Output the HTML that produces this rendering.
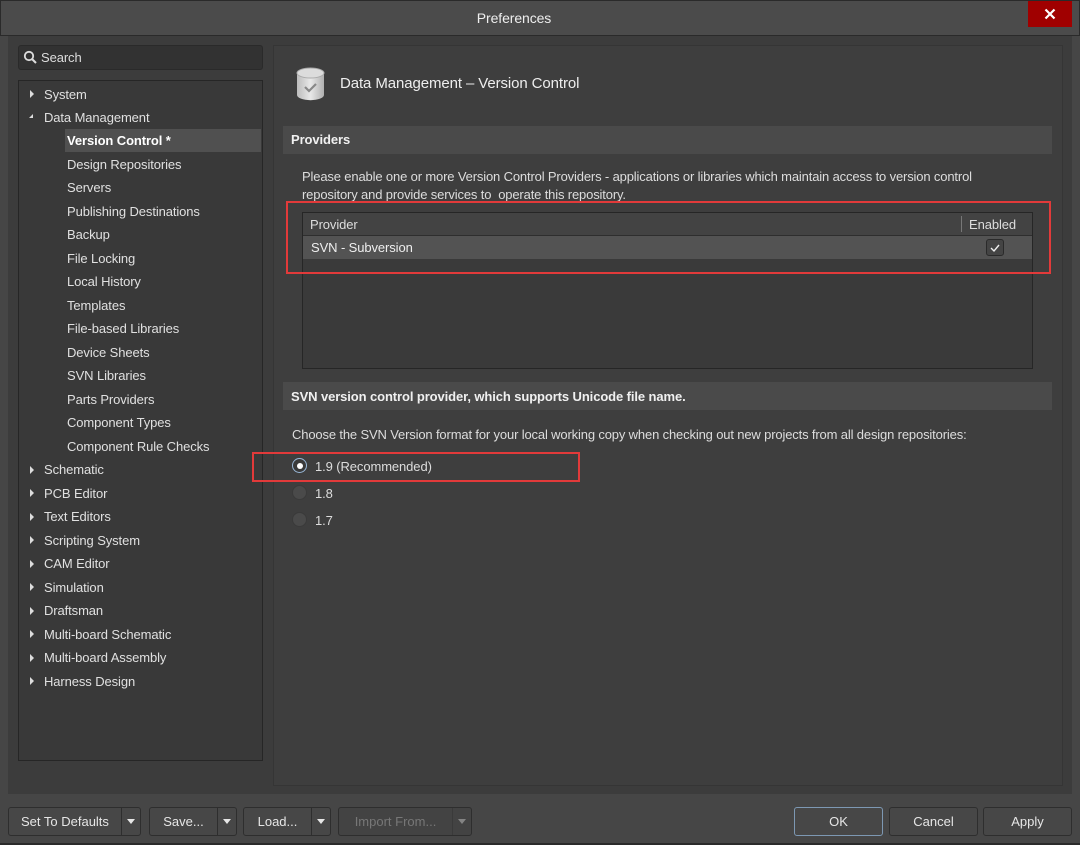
<!DOCTYPE html>
<html><head><meta charset="utf-8"><style>
*{box-sizing:border-box;margin:0;padding:0}
body{width:1080px;height:845px;background:#464646;font-family:"Liberation Sans",sans-serif;font-size:13px;color:#e6e6e6;position:relative;overflow:hidden}
.a{position:absolute}
.t{position:absolute;white-space:nowrap;letter-spacing:-0.1px}
.tree .t{font-size:13px;color:#e0e0e0}
.arr{position:absolute;width:0;height:0;border-top:4px solid transparent;border-bottom:4px solid transparent;border-left:4px solid #ddd}
.btn{position:absolute;top:807px;height:29px;border:1px solid #2e2e2e;border-radius:3px;background:#474747;color:#e6e6e6;font-size:13px;text-align:center;line-height:27px}
.dd{position:absolute;top:0;right:0;width:19px;height:27px;border-left:1px solid #2e2e2e}
.dd:after{content:"";position:absolute;left:5px;top:11px;border-left:4px solid transparent;border-right:4px solid transparent;border-top:5px solid #e6e6e6}
.radio{position:absolute;width:15px;height:15px;border-radius:50%;background:#4a4a4a;border:1px solid #3a3a3a}
</style></head><body>
<div class="a" style="left:0;top:0;width:1080px;height:36px;background:#4b4b4b;border:1px solid #2a2a2a"></div>
<div class="t" style="left:0;width:1028px;top:10px;text-align:center;font-size:14px;color:#eee">Preferences</div>
<div class="a" style="left:1028px;top:1px;width:44px;height:26px;background:#a00000"></div>
<svg class="a" style="left:1044px;top:8px" width="12" height="12"><path d="M1.5 1.5 L10.5 10.5 M10.5 1.5 L1.5 10.5" stroke="#fff" stroke-width="2.2"/></svg>
<div class="a" style="left:8px;top:36px;width:1064px;height:758px;background:#3c3c3c"></div>
<!-- search -->
<div class="a" style="left:18px;top:45px;width:245px;height:25px;background:#323232;border:1px solid #2a2a2a;border-radius:3px"></div>
<svg class="a" style="left:23px;top:50px" width="14" height="14"><circle cx="6" cy="6" r="4.2" stroke="#ddd" stroke-width="1.8" fill="none"/><line x1="9" y1="9" x2="13" y2="13" stroke="#ddd" stroke-width="2"/></svg>
<div class="t" style="left:41px;top:50px;color:#ddd">Search</div>
<!-- tree -->
<div class="a" style="left:18px;top:80px;width:245px;height:681px;background:#393939;border:1px solid #262626"></div>
<div class="a" style="left:65px;top:129px;width:196px;height:23px;background:#505050"></div>
<div class="tree">
<div class="arr" style="left:30px;top:90px"></div><div class="t" style="left:44px;top:87px">System</div>
<div class="a" style="left:29px;top:114px;border-left:4px solid transparent;border-bottom:4px solid #ddd;width:0;height:0"></div><div class="t" style="left:44px;top:110px">Data Management</div>
<div class="t" style="left:67px;top:133px;font-weight:bold;color:#fff">Version Control *</div>
<div class="t" style="left:67px;top:157px">Design Repositories</div>
<div class="t" style="left:67px;top:180px">Servers</div>
<div class="t" style="left:67px;top:204px">Publishing Destinations</div>
<div class="t" style="left:67px;top:227px">Backup</div>
<div class="t" style="left:67px;top:251px">File Locking</div>
<div class="t" style="left:67px;top:274px">Local History</div>
<div class="t" style="left:67px;top:298px">Templates</div>
<div class="t" style="left:67px;top:321px">File-based Libraries</div>
<div class="t" style="left:67px;top:345px">Device Sheets</div>
<div class="t" style="left:67px;top:368px">SVN Libraries</div>
<div class="t" style="left:67px;top:392px">Parts Providers</div>
<div class="t" style="left:67px;top:415px">Component Types</div>
<div class="t" style="left:67px;top:439px">Component Rule Checks</div>
<div class="arr" style="left:30px;top:466px"></div><div class="t" style="left:44px;top:462px">Schematic</div>
<div class="arr" style="left:30px;top:489px"></div><div class="t" style="left:44px;top:486px">PCB Editor</div>
<div class="arr" style="left:30px;top:513px"></div><div class="t" style="left:44px;top:509px">Text Editors</div>
<div class="arr" style="left:30px;top:536px"></div><div class="t" style="left:44px;top:533px">Scripting System</div>
<div class="arr" style="left:30px;top:560px"></div><div class="t" style="left:44px;top:556px">CAM Editor</div>
<div class="arr" style="left:30px;top:583px"></div><div class="t" style="left:44px;top:580px">Simulation</div>
<div class="arr" style="left:30px;top:607px"></div><div class="t" style="left:44px;top:603px">Draftsman</div>
<div class="arr" style="left:30px;top:630px"></div><div class="t" style="left:44px;top:627px">Multi-board Schematic</div>
<div class="arr" style="left:30px;top:654px"></div><div class="t" style="left:44px;top:650px">Multi-board Assembly</div>
<div class="arr" style="left:30px;top:677px"></div><div class="t" style="left:44px;top:674px">Harness Design</div>
</div>
<!-- right panel -->
<div class="a" style="left:273px;top:45px;width:790px;height:741px;background:#3e3e3e;border:1px solid #353535"></div>
<svg class="a" style="left:296px;top:67px" width="30" height="34"><defs><linearGradient id="g" x1="0" x2="1"><stop offset="0" stop-color="#bcbcbc"/><stop offset=".5" stop-color="#e8e8e8"/><stop offset="1" stop-color="#b0b0b0"/></linearGradient></defs><path d="M1 6 V28 A13 5 0 0 0 28 28 V6 Z" fill="url(#g)"/><ellipse cx="14.5" cy="6" rx="13.5" ry="5" fill="#dcdcdc" stroke="#aaa"/><path d="M9 20 l4 4 l7 -7" stroke="#888" stroke-width="2.2" fill="none"/></svg>
<div class="t" style="left:340px;top:75px;font-size:15px;color:#eee">Data Management – Version Control</div>
<div class="a" style="left:283px;top:126px;width:769px;height:28px;background:#4a4a4a"></div>
<div class="t" style="left:291px;top:132px;font-weight:bold;color:#f0f0f0">Providers</div>
<div class="t" style="left:302px;top:168px;color:#ddd;line-height:18px;letter-spacing:-0.15px">Please enable one or more Version Control Providers - applications or libraries which maintain access to version control<br>repository and provide services to&nbsp; operate this repository.</div>
<div class="a" style="left:302px;top:212px;width:731px;height:157px;background:#3a3a3a;border:1px solid #262626"></div>
<div class="a" style="left:303px;top:213px;width:729px;height:23px;background:#434343;border-bottom:1px solid #2e2e2e"></div>
<div class="t" style="left:310px;top:217px;color:#ddd">Provider</div>
<div class="a" style="left:961px;top:216px;width:1px;height:16px;background:#777"></div>
<div class="t" style="left:969px;top:217px;color:#ddd">Enabled</div>
<div class="a" style="left:303px;top:236px;width:729px;height:23px;background:#535353"></div>
<div class="t" style="left:311px;top:240px;color:#eee">SVN - Subversion</div>
<div class="a" style="left:986px;top:239px;width:18px;height:17px;border:1px solid #2a2a2a;border-radius:3px;background:#444"></div>
<svg class="a" style="left:989px;top:242px" width="12" height="11"><path d="M2 6 l3 3 l5 -6" stroke="#eee" stroke-width="1.4" fill="none"/></svg>
<div class="a" style="left:286px;top:201px;width:765px;height:73px;border:2px solid #e23a3a"></div>
<div class="a" style="left:283px;top:382px;width:769px;height:28px;background:#4a4a4a"></div>
<div class="t" style="left:291px;top:389px;font-weight:bold;color:#f0f0f0">SVN version control provider, which supports Unicode file name.</div>
<div class="t" style="left:292px;top:427px;color:#ddd;letter-spacing:-0.15px">Choose the SVN Version format for your local working copy when checking out new projects from all design repositories:</div>
<div class="radio" style="left:292px;top:458px;border:1.5px solid #9ab8d8;background:#3a3a3a"></div>
<div class="a" style="left:297px;top:463px;width:6px;height:6px;border-radius:50%;background:#fff"></div>
<div class="t" style="left:315px;top:459px;color:#ddd">1.9 (Recommended)</div>
<div class="radio" style="left:292px;top:485px"></div><div class="t" style="left:315px;top:486px;color:#ddd">1.8</div>
<div class="radio" style="left:292px;top:512px"></div><div class="t" style="left:315px;top:513px;color:#ddd">1.7</div>
<div class="a" style="left:252px;top:452px;width:328px;height:30px;border:2px solid #e23a3a"></div>
<!-- footer -->
<div class="btn" style="left:8px;width:133px;text-align:left;padding-left:12px">Set To Defaults<div class="dd"></div></div>
<div class="btn" style="left:149px;width:88px;padding-right:19px">Save...<div class="dd"></div></div>
<div class="btn" style="left:243px;width:88px;padding-right:19px">Load...<div class="dd"></div></div>
<div class="btn" style="left:338px;width:134px;padding-right:19px;color:#777;background:#434343">Import From...<div class="dd" style="opacity:.4"></div></div>
<div class="btn" style="left:794px;width:89px;border-color:#7d98b3">OK</div>
<div class="btn" style="left:889px;width:89px">Cancel</div>
<div class="btn" style="left:983px;width:89px">Apply</div>
<div class="a" style="left:0;top:843px;width:1080px;height:2px;background:#2a2a2a"></div>
</body></html>
